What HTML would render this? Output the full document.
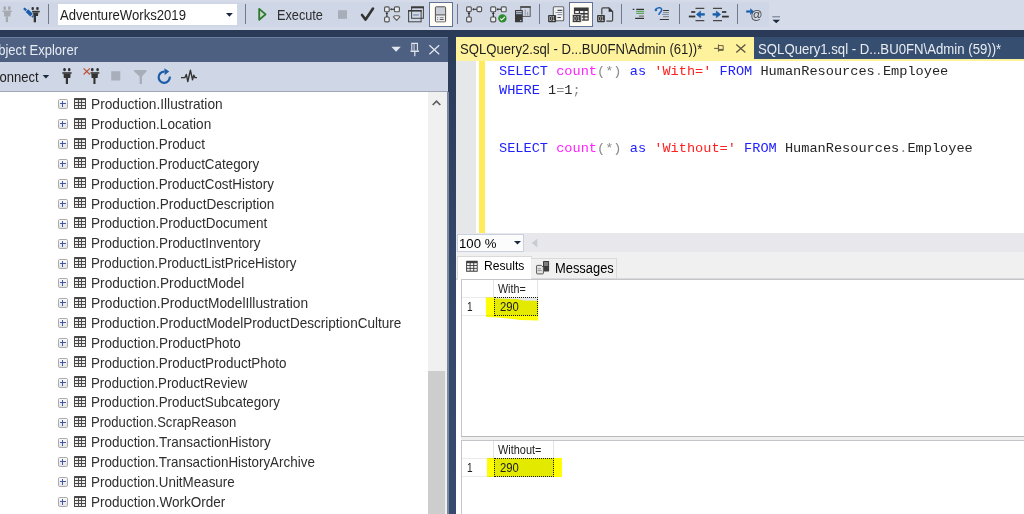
<!DOCTYPE html>
<html><head><meta charset="utf-8"><style>
*{margin:0;padding:0;box-sizing:border-box}
html,body{width:1024px;height:514px;overflow:hidden;font-family:"Liberation Sans",sans-serif;position:relative}
body{background:linear-gradient(#293955 0px,#2B3C5A 60px,#34486A 280px,#374B6E 514px)}
.a{position:absolute}
.t{position:absolute;white-space:pre;line-height:1;transform-origin:0 0}
svg{position:absolute;overflow:visible}
.sep{position:absolute;top:4px;width:1px;height:20px;background:#737A90}
.hl{position:absolute;top:2px;width:24px;height:25px;background:#FFFDF6;border:1px solid #5F7298}
#code{left:499px;top:62px;font-family:"Liberation Mono",monospace;font-size:13.62px;line-height:19.23px;white-space:pre;color:#262626}
.kw{color:#2020FF}.fn{color:#FF22FF}.st{color:#FF2020}.op{color:#8A8A8A}

</style></head><body>
<svg width="0" height="0" style="position:absolute"><defs><linearGradient id="exg" x1="0" y1="0" x2="0" y2="1"><stop offset="0" stop-color="#FAFAFA"/><stop offset="1" stop-color="#E2E2E2"/></linearGradient></defs></svg>
<div class="a" style="left:0;top:0;width:1024px;height:30px;background:#D6DBE9"></div>
<div class="a" style="left:0;top:2px;width:769px;height:25px;background:#CFD6E5"></div>
<div class="a" style="left:769px;top:2px;width:12px;height:25px;background:#D6DBE9"></div>
<div class="sep" style="left:48px"></div>
<div class="sep" style="left:245px"></div>
<div class="sep" style="left:457px"></div>
<div class="sep" style="left:539px"></div>
<div class="sep" style="left:621px"></div>
<div class="sep" style="left:679px"></div>
<div class="sep" style="left:737px"></div>
<svg style="left:0;top:0;z-index:5" width="1024" height="514" viewBox="0 0 1024 514">
<!-- gray plug -->
<g fill="#A6A9B0"><rect x="3.5" y="6.3" width="2.5" height="3.8" rx="1.1"/><rect x="8" y="6.3" width="2.6" height="3.8" rx="1.1"/><rect x="2.5" y="10.6" width="9.4" height="1.4"/><path d="M3.9 12h6.8l-0.4 4.5h-6z"/><rect x="5.8" y="16.3" width="2.2" height="5.8"/></g>
<!-- pencil plug -->
<g fill="#343434"><rect x="31.5" y="6.9" width="2.4" height="3.2" rx="1.1"/><rect x="36.2" y="6.9" width="2.5" height="3.2" rx="1.1"/><rect x="32.1" y="10.8" width="7.6" height="1.6"/><path d="M33.1 12.4h5.2l-0.3 3.5h-4.6z"/><rect x="33.7" y="15.7" width="2.3" height="6.6"/></g>
<g stroke="#1A5EAB" stroke-linecap="butt"><path d="M23.9 8.2L26.2 10.4" stroke-width="2.2"/><path d="M26.9 10.6L31.6 15.1" stroke-width="3.6"/><path d="M32 15.8L33.3 17" stroke-width="1.8"/></g>
<!-- execute -->
<path d="M259.2 8.9V19.8L265.6 14.35Z" fill="#CBD8CC" stroke="#2C7A2C" stroke-width="1.8" stroke-linejoin="round"/>
<!-- stop -->
<rect x="338" y="10.2" width="9" height="8.6" fill="#A8AEB9"/>
<!-- check -->
<path d="M362 15L365.6 19.6L373 8.6" fill="none" stroke="#333" stroke-width="2.6" stroke-linecap="round" stroke-linejoin="round"/>
<!-- display est plan -->
<g fill="#E9ECF1" stroke="#555" stroke-width="1.15"><rect x="384.6" y="6.8" width="4.6" height="4.9" rx="1"/><rect x="394.4" y="6.8" width="5" height="4.9" rx="1"/><rect x="384.6" y="17" width="4.6" height="4.8" rx="1"/></g>
<g stroke="#2A2A2A" stroke-width="1.1" fill="#2A2A2A"><path d="M391.2 9.3h3.2M386.9 12.2v4.8"/><path d="M390 9.3l1.6-1.3v2.6z" stroke="none"/><path d="M386.9 12.4l-1.3 1.6h2.6z" stroke="none"/></g>
<path d="M393.4 16.8l1.3-1.1h3.9l1.3 1.1l-3.3 3.5z" fill="#E8EAEE" stroke="#5E5E5E" stroke-width="1.1" stroke-linejoin="round"/>
<!-- two windows -->
<g fill="none" stroke="#444" stroke-width="1"><rect x="411.6" y="7" width="11.8" height="11.3"/><rect x="408.6" y="10.5" width="12.5" height="11.3" fill="none"/></g>
<rect x="411.1" y="6.5" width="12.8" height="1.8" fill="#3A3A3A"/><rect x="408.1" y="10" width="13.5" height="1.6" fill="#3A3A3A"/>
<rect x="413.2" y="14.3" width="5.6" height="1.3" fill="#7C8CA5"/>
<!-- hl icon 1 -->
<rect x="435.4" y="6.8" width="10.2" height="15" rx="0.8" fill="#C9CED9" stroke="#505050" stroke-width="1"/>
<rect x="436" y="14.8" width="9" height="6.5" fill="#ECEEF2"/><rect x="435.5" y="14.2" width="10.2" height="1.3" fill="#6E6E6E"/>
<g fill="#555"><rect x="437.2" y="17.2" width="0.9" height="0.9"/><rect x="439.7" y="17.1" width="4" height="0.9" fill="#888"/><rect x="437.2" y="19" width="0.9" height="0.9"/><rect x="439.7" y="18.9" width="4" height="1.1"/></g>
<!-- plan icon 1 -->
<g fill="#E9ECF1" stroke="#555" stroke-width="1.15"><rect x="466.6" y="6.8" width="4.7" height="4.8" rx="1"/><rect x="477" y="6.8" width="4.6" height="4.8" rx="1"/><rect x="466.6" y="17" width="4.7" height="4.8" rx="1"/></g>
<g stroke="#2A2A2A" stroke-width="1.1"><path d="M473.2 9.3h3.6M469 12.2v4.6"/></g><g fill="#2A2A2A"><path d="M472.2 9.3l1.6-1.4v2.8z"/><path d="M469 12.3l-1.4 1.6h2.8z"/></g>
<!-- plan icon 2 -->
<g fill="#E9ECF1" stroke="#555" stroke-width="1.15"><rect x="490.7" y="6.8" width="5" height="4.9" rx="1"/><rect x="501.3" y="6.8" width="4.9" height="4.9" rx="1"/><rect x="490.7" y="17" width="5" height="4.8" rx="1"/></g>
<g stroke="#2A2A2A" stroke-width="1.1"><path d="M497.6 9.3h3.6M493.3 12.3v4.6"/></g><g fill="#2A2A2A"><path d="M496.6 9.3l1.6-1.4v2.8z"/><path d="M493.3 12.3l-1.4 1.6h2.8z"/></g>
<circle cx="502.4" cy="18.4" r="4.2" fill="#2E8B2E"/><path d="M500.2 18.6l1.5 1.4l3.2-3.2" fill="none" stroke="#F4F8F0" stroke-width="1.1"/>
<!-- client stats -->
<rect x="520.8" y="6.8" width="9.4" height="9.6" fill="none" stroke="#5A5A5A" stroke-width="1"/><rect x="520.3" y="6.3" width="10.4" height="1.5" fill="#444"/>
<g fill="#9AA0AA"><rect x="524.7" y="9.5" width="1.2" height="6"/><rect x="527" y="11.8" width="1.2" height="3.7"/></g>
<rect x="515" y="10" width="7.8" height="12.3" rx="0.6" fill="#3A3A3A"/><rect x="516" y="11" width="5.8" height="1.2" fill="#B9BCC4"/><rect x="516" y="12.6" width="5.8" height="1.6" fill="#9EB4CC"/><rect x="520" y="20" width="1.3" height="1.1" fill="#AFC4C8"/>
<!-- results to text -->
<rect x="553.3" y="6.8" width="10.4" height="14" rx="1" fill="#EEF0F4" stroke="#686868" stroke-width="1.1"/>
<g><rect x="557.5" y="9.8" width="4.8" height="1.1" fill="#333"/><rect x="555.5" y="12" width="6.8" height="1" fill="#999"/><rect x="557.5" y="14" width="4.8" height="1.1" fill="#8A96A8"/><rect x="557.5" y="17" width="3.3" height="1" fill="#444"/></g>
<rect x="548.1" y="14.9" width="8" height="7.4" rx="0.8" fill="#3A3A3A"/>
<text x="549.1" y="21.3" font-family="Liberation Sans" font-size="7.5" fill="#DDDDDD" textLength="6" lengthAdjust="spacingAndGlyphs">01</text>
<!-- results to grid -->
<rect x="573.9" y="7.5" width="14.8" height="13.2" fill="#3A3A3A"/>
<g fill="#F2F3F6"><rect x="575.2" y="11" width="3.6" height="2"/><rect x="580" y="11" width="3.4" height="2"/><rect x="584.6" y="11" width="3" height="2"/><rect x="584.6" y="14.5" width="3" height="1.8"/><rect x="584.6" y="17.6" width="3" height="1.8"/><rect x="581.5" y="14.5" width="1.8" height="1.8"/><rect x="581.5" y="17.6" width="1.8" height="1.8"/></g>
<rect x="572.3" y="14.4" width="9" height="8.2" rx="0.8" fill="#3A3A3A" stroke="#FFFDF6" stroke-width="0.8"/>
<text x="573.6" y="21.3" font-family="Liberation Sans" font-size="7.5" fill="#DDDDDD" textLength="6.3" lengthAdjust="spacingAndGlyphs">01</text>
<!-- results to file -->
<path d="M601.8 14.5V8.9q0-1 1-1h6.3l3.5 3.6v8.6q0 1-1 1h-5.2" fill="none" stroke="#474747" stroke-width="1.2"/>
<path d="M608.6 7.6l4.3 4.2h-4.3z" fill="#2E2E2E"/>
<rect x="597.1" y="14.9" width="7.8" height="7.4" rx="0.8" fill="#3A3A3A"/>
<text x="598" y="21.3" font-family="Liberation Sans" font-size="7.5" fill="#DDDDDD" textLength="6" lengthAdjust="spacingAndGlyphs">01</text>
<!-- comment -->
<g stroke-width="1.3"><path d="M632.7 9.3h1.6M636.2 9.3h7.8M635.2 18.4h8.8" stroke="#333"/><path d="M636.2 11.4h7.9M636.2 13.3h7.9" stroke="#5DA55D"/><path d="M639 16.1h5" stroke="#7A7A7A"/></g>
<!-- uncomment -->
<path d="M655.8 9.2Q657.6 7.4 660 7.8Q662.3 8.6 661.4 10.9L658.9 14.3" fill="none" stroke="#1C64B4" stroke-width="1.5" stroke-linecap="round"/><circle cx="655.9" cy="9.9" r="1.25" fill="#1C64B4"/>
<g stroke-width="1.05"><path d="M663.1 10.5h5.8M659.8 19.4h9.1" stroke="#333"/><path d="M663.1 12.4h5.8M663.1 16.6h5.8" stroke="#8A8A8A"/><path d="M662.2 14.4h6.7" stroke="#7890AC"/></g>
<!-- decrease indent -->
<g stroke="#474747"><path d="M695.5 8.3h8.8M695.5 20.7h8.8" stroke-width="1.3"/><path d="M691.2 12h4.1" stroke-width="1.7" stroke="#333"/><path d="M688.8 16.5h6.5" stroke-width="1.8" stroke="#333"/></g>
<path d="M696.3 14.4l4.3-3.3v2.5h3.9v1.6h-3.9v2.5z" fill="#1A5FAD" stroke="#1A5FAD" stroke-width="0.6" stroke-linejoin="round"/>
<!-- increase indent -->
<g stroke="#474747"><path d="M713 8.3h9M713 20.7h9" stroke-width="1.3"/><path d="M722 12h4.3" stroke-width="1.7" stroke="#333"/><path d="M722 16.6h6.8" stroke-width="1.8" stroke="#333"/></g>
<path d="M720.6 14.4l-4.3-3.3v2.5h-3.4v1.6h3.4v2.5z" fill="#1A5FAD" stroke="#1A5FAD" stroke-width="0.6" stroke-linejoin="round"/>
<!-- @ -->
<path d="M746.2 11.5h4.2" stroke="#1A5FAD" stroke-width="2.2"/><path d="M750.2 8.2l3.8 3.3l-3.8 3.4z" fill="#1A5FAD"/>
<text x="750.6" y="18.6" font-family="Liberation Sans" font-size="13" fill="#4A4A4A" textLength="12" lengthAdjust="spacingAndGlyphs">@</text>
<!-- overflow -->
<path d="M772.3 16.8h7.7" stroke="#5B6878" stroke-width="0.9"/><path d="M772.5 19.8h7.5l-3.75 3.5z" fill="#1B293E"/>
<!-- OE header icons -->
<path d="M391.4 46.7h9.4l-4.7 5z" fill="#E2E6EE"/>
<g fill="none" stroke="#E2E6EE"><path d="M411.8 50.5V43.4h5.6v7.1" stroke-width="1.1"/><path d="M414.1 43.6v6.9" stroke-width="0.9"/><path d="M410.5 51.2h8.5" stroke-width="1.5"/><path d="M414.8 51.5v4.7" stroke-width="1.2"/></g>
<path d="M429.4 45.3l9.8 8.9M439.2 45.3l-9.8 8.9" stroke="#E2E6EE" stroke-width="1.3"/>
<!-- tab icons -->
<g fill="none" stroke="#6B6246"><path d="M714.1 48.4h4.4" stroke-width="1.1"/><path d="M718.5 44.4v7.3" stroke-width="1.1"/><path d="M719 45.6h4.2v4.7h-4.2" stroke-width="1"/><path d="M719 49.6h4.2" stroke-width="1.4"/></g>
<path d="M736.3 44.6l9.1 8M745.4 44.6l-9.1 8" stroke="#5A5440" stroke-width="1.3"/>
<!-- OE toolbar icons -->
<path d="M42.6 75h6.6l-3.3 3.5z" fill="#1B293E"/>
<g fill="#333"><rect x="63.3" y="68.1" width="2.5" height="3.2" rx="1.1"/><rect x="68" y="68.1" width="2.4" height="3.2" rx="1.1"/><rect x="62.3" y="72.2" width="9.3" height="1.5"/><path d="M63.5 73.6h7.1l-0.3 4.3h-6.5z"/><rect x="65.8" y="77.7" width="2.2" height="6.3"/></g>
<path d="M83.6 68.3l6.3 6.2M89.9 68.3l-6.3 6.2" stroke="#BF5030" stroke-width="1.15"/>
<g fill="#333"><rect x="91" y="68.1" width="2.5" height="3.2" rx="1.1"/><rect x="96.4" y="68.1" width="2.4" height="3.2" rx="1.1"/><rect x="90.5" y="72.2" width="8.8" height="1.5"/><path d="M91.3 73.6h6.7l-0.3 4.4h-6.1z"/><rect x="93.4" y="77.8" width="2.1" height="6.2"/></g>
<rect x="111.2" y="71.2" width="9.1" height="9.3" fill="#A9AFBA"/>
<path d="M134 70h12.6v1.2l-4.6 5.2v7.6h-2.4v-7.6l-5.6-5.2z" fill="#A8AEB8"/>
<path d="M169.8 76.6A5.6 5.6 0 1 1 164.6 71.6" fill="none" stroke="#1C5CA8" stroke-width="2.2"/>
<path d="M164.4 68.2l4.8 3.4l-4.5 3.3z" fill="#1C5CA8"/>
<path d="M181 77.6h4l1.3-3.2l1.5 7.2l2.6-11.5l2.1 9.6l1.3-4.5l1.2 2.4h2" fill="none" stroke="#333" stroke-width="1.4" stroke-linejoin="round"/>
<!-- results icons -->
<rect x="466.1" y="260.7" width="11.6" height="11" rx="0.5" fill="#3E3E3E"/>
<g fill="#F4F4F4"><rect x="467.1" y="263.2" width="2.6" height="1.9"/><rect x="470.6" y="263.2" width="2.6" height="1.9"/><rect x="474.2" y="263.2" width="2.6" height="1.9"/><rect x="467.1" y="266" width="2.6" height="1.9"/><rect x="470.6" y="266" width="2.6" height="1.9"/><rect x="474.2" y="266" width="2.6" height="1.9"/><rect x="467.1" y="268.8" width="2.6" height="1.9"/><rect x="470.6" y="268.8" width="2.6" height="1.9"/><rect x="474.2" y="268.8" width="2.6" height="1.9"/></g>
<rect x="543" y="261.1" width="6.1" height="10.3" rx="0.6" fill="#3C3C3C"/><rect x="544" y="262.5" width="4.1" height="1" fill="#BDBDBD"/><rect x="544" y="264.5" width="4.1" height="1" fill="#BDBDBD"/>
<path d="M536.6 266q0-0.6 0.6-0.6h4.2l2 2v5.9q0 0.6-0.6 0.6h-5.6q-0.6 0-0.6-0.6z" fill="#E6E6E6" stroke="#5A5A5A" stroke-width="1"/>
<g fill="#8A8A8A"><rect x="537.8" y="268.3" width="3.2" height="0.9"/><rect x="537.8" y="270.2" width="3.8" height="0.9"/></g>
</svg>

<div class="a" style="left:58px;top:4px;width:179px;height:21px;background:#fff"></div>
<div class="t" style="left:59.70px;top:7.53px;font-size:14.5px;color:#1E1E1E;font-family:'Liberation Sans',sans-serif;transform:scaleX(0.9050);">AdventureWorks2019</div>
<svg style="left:226.3px;top:13px" width="8" height="5"><path d="M0 0h6.8l-3.4 3.8z" fill="#1B293E"/></svg>
<div class="t" style="left:276.72px;top:7.53px;font-size:14.5px;color:#2E2E2E;font-family:'Liberation Sans',sans-serif;transform:scaleX(0.8765);">Execute</div>
<div class="hl" style="left:429px"></div>
<div class="hl" style="left:569px"></div>
<div class="a" style="left:0;top:37px;width:448px;height:25px;background:#4D6082;border-top:1px solid #6D7FA0"></div>
<div class="t" style="left:-11.89px;top:42.56px;font-size:14.7px;color:#E8ECF3;font-family:'Liberation Sans',sans-serif;transform:scaleX(0.8900);">Object Explorer</div>

<div class="a" style="left:0;top:62px;width:448px;height:29px;background:#CFD6E5"></div>
<div class="a" style="left:0;top:91px;width:448px;height:1px;background:#9EA6B6"></div>
<div class="a" style="left:0;top:92px;width:428px;height:422px;background:#fff"></div>
<div class="t" style="left:-9.70px;top:69.63px;font-size:14.5px;color:#1E1E1E;font-family:'Liberation Sans',sans-serif;transform:scaleX(0.9000);">Connect</div>

<div class="a" style="left:428px;top:92px;width:19px;height:422px;background:#F0F0F0"></div>
<div class="a" style="left:428px;top:371px;width:17px;height:143px;background:#CDCDCD"></div>
<svg style="left:432px;top:99px" width="10" height="8"><path d="M0.7 6L4.5 2.1L8.3 6" fill="none" stroke="#5E5E5E" stroke-width="1.7"/></svg>
<div class="a" style="left:447px;top:92px;width:2px;height:422px;background:#7A879F"></div>
<svg style="left:58px;top:99px" width="10" height="10"><rect x="0.5" y="0.5" width="9" height="9" rx="1.2" fill="url(#exg)" stroke="#ABABAB"/><path d="M2 4.5h6M4.5 2v6" stroke="#3F58A6" stroke-width="1"/></svg>
<svg style="left:74px;top:98px" width="12" height="11"><rect x="0" y="0" width="12" height="11" rx="0.6" fill="#474747"/><g fill="#ECECEC"><rect x="1" y="2" width="3" height="2"/><rect x="5" y="2" width="2" height="2"/><rect x="8" y="2" width="3" height="2"/><rect x="1" y="5" width="3" height="2"/><rect x="5" y="5" width="2" height="2"/><rect x="8" y="5" width="3" height="2"/><rect x="1" y="8" width="3" height="2"/><rect x="5" y="8" width="2" height="2"/><rect x="8" y="8" width="3" height="2"/></g></svg>
<div class="t" style="left:90.89px;top:96.10px;font-size:15px;color:#2E2E2E;transform:scaleX(0.9126)">Production.Illustration</div>
<svg style="left:58px;top:119px" width="10" height="10"><rect x="0.5" y="0.5" width="9" height="9" rx="1.2" fill="url(#exg)" stroke="#ABABAB"/><path d="M2 4.5h6M4.5 2v6" stroke="#3F58A6" stroke-width="1"/></svg>
<svg style="left:74px;top:118px" width="12" height="11"><rect x="0" y="0" width="12" height="11" rx="0.6" fill="#474747"/><g fill="#ECECEC"><rect x="1" y="2" width="3" height="2"/><rect x="5" y="2" width="2" height="2"/><rect x="8" y="2" width="3" height="2"/><rect x="1" y="5" width="3" height="2"/><rect x="5" y="5" width="2" height="2"/><rect x="8" y="5" width="3" height="2"/><rect x="1" y="8" width="3" height="2"/><rect x="5" y="8" width="2" height="2"/><rect x="8" y="8" width="3" height="2"/></g></svg>
<div class="t" style="left:90.89px;top:115.99px;font-size:15px;color:#2E2E2E;transform:scaleX(0.9069)">Production.Location</div>
<svg style="left:58px;top:139px" width="10" height="10"><rect x="0.5" y="0.5" width="9" height="9" rx="1.2" fill="url(#exg)" stroke="#ABABAB"/><path d="M2 4.5h6M4.5 2v6" stroke="#3F58A6" stroke-width="1"/></svg>
<svg style="left:74px;top:138px" width="12" height="11"><rect x="0" y="0" width="12" height="11" rx="0.6" fill="#474747"/><g fill="#ECECEC"><rect x="1" y="2" width="3" height="2"/><rect x="5" y="2" width="2" height="2"/><rect x="8" y="2" width="3" height="2"/><rect x="1" y="5" width="3" height="2"/><rect x="5" y="5" width="2" height="2"/><rect x="8" y="5" width="3" height="2"/><rect x="1" y="8" width="3" height="2"/><rect x="5" y="8" width="2" height="2"/><rect x="8" y="8" width="3" height="2"/></g></svg>
<div class="t" style="left:90.91px;top:135.88px;font-size:15px;color:#2E2E2E;transform:scaleX(0.8929)">Production.Product</div>
<svg style="left:58px;top:159px" width="10" height="10"><rect x="0.5" y="0.5" width="9" height="9" rx="1.2" fill="url(#exg)" stroke="#ABABAB"/><path d="M2 4.5h6M4.5 2v6" stroke="#3F58A6" stroke-width="1"/></svg>
<svg style="left:74px;top:157px" width="12" height="11"><rect x="0" y="0" width="12" height="11" rx="0.6" fill="#474747"/><g fill="#ECECEC"><rect x="1" y="2" width="3" height="2"/><rect x="5" y="2" width="2" height="2"/><rect x="8" y="2" width="3" height="2"/><rect x="1" y="5" width="3" height="2"/><rect x="5" y="5" width="2" height="2"/><rect x="8" y="5" width="3" height="2"/><rect x="1" y="8" width="3" height="2"/><rect x="5" y="8" width="2" height="2"/><rect x="8" y="8" width="3" height="2"/></g></svg>
<div class="t" style="left:90.91px;top:155.77px;font-size:15px;color:#2E2E2E;transform:scaleX(0.8926)">Production.ProductCategory</div>
<svg style="left:58px;top:179px" width="10" height="10"><rect x="0.5" y="0.5" width="9" height="9" rx="1.2" fill="url(#exg)" stroke="#ABABAB"/><path d="M2 4.5h6M4.5 2v6" stroke="#3F58A6" stroke-width="1"/></svg>
<svg style="left:74px;top:177px" width="12" height="11"><rect x="0" y="0" width="12" height="11" rx="0.6" fill="#474747"/><g fill="#ECECEC"><rect x="1" y="2" width="3" height="2"/><rect x="5" y="2" width="2" height="2"/><rect x="8" y="2" width="3" height="2"/><rect x="1" y="5" width="3" height="2"/><rect x="5" y="5" width="2" height="2"/><rect x="8" y="5" width="3" height="2"/><rect x="1" y="8" width="3" height="2"/><rect x="5" y="8" width="2" height="2"/><rect x="8" y="8" width="3" height="2"/></g></svg>
<div class="t" style="left:90.91px;top:175.66px;font-size:15px;color:#2E2E2E;transform:scaleX(0.8917)">Production.ProductCostHistory</div>
<svg style="left:58px;top:199px" width="10" height="10"><rect x="0.5" y="0.5" width="9" height="9" rx="1.2" fill="url(#exg)" stroke="#ABABAB"/><path d="M2 4.5h6M4.5 2v6" stroke="#3F58A6" stroke-width="1"/></svg>
<svg style="left:74px;top:197px" width="12" height="11"><rect x="0" y="0" width="12" height="11" rx="0.6" fill="#474747"/><g fill="#ECECEC"><rect x="1" y="2" width="3" height="2"/><rect x="5" y="2" width="2" height="2"/><rect x="8" y="2" width="3" height="2"/><rect x="1" y="5" width="3" height="2"/><rect x="5" y="5" width="2" height="2"/><rect x="8" y="5" width="3" height="2"/><rect x="1" y="8" width="3" height="2"/><rect x="5" y="8" width="2" height="2"/><rect x="8" y="8" width="3" height="2"/></g></svg>
<div class="t" style="left:90.90px;top:195.55px;font-size:15px;color:#2E2E2E;transform:scaleX(0.9050)">Production.ProductDescription</div>
<svg style="left:58px;top:219px" width="10" height="10"><rect x="0.5" y="0.5" width="9" height="9" rx="1.2" fill="url(#exg)" stroke="#ABABAB"/><path d="M2 4.5h6M4.5 2v6" stroke="#3F58A6" stroke-width="1"/></svg>
<svg style="left:74px;top:217px" width="12" height="11"><rect x="0" y="0" width="12" height="11" rx="0.6" fill="#474747"/><g fill="#ECECEC"><rect x="1" y="2" width="3" height="2"/><rect x="5" y="2" width="2" height="2"/><rect x="8" y="2" width="3" height="2"/><rect x="1" y="5" width="3" height="2"/><rect x="5" y="5" width="2" height="2"/><rect x="8" y="5" width="3" height="2"/><rect x="1" y="8" width="3" height="2"/><rect x="5" y="8" width="2" height="2"/><rect x="8" y="8" width="3" height="2"/></g></svg>
<div class="t" style="left:90.90px;top:215.44px;font-size:15px;color:#2E2E2E;transform:scaleX(0.9000)">Production.ProductDocument</div>
<svg style="left:58px;top:239px" width="10" height="10"><rect x="0.5" y="0.5" width="9" height="9" rx="1.2" fill="url(#exg)" stroke="#ABABAB"/><path d="M2 4.5h6M4.5 2v6" stroke="#3F58A6" stroke-width="1"/></svg>
<svg style="left:74px;top:237px" width="12" height="11"><rect x="0" y="0" width="12" height="11" rx="0.6" fill="#474747"/><g fill="#ECECEC"><rect x="1" y="2" width="3" height="2"/><rect x="5" y="2" width="2" height="2"/><rect x="8" y="2" width="3" height="2"/><rect x="1" y="5" width="3" height="2"/><rect x="5" y="5" width="2" height="2"/><rect x="8" y="5" width="3" height="2"/><rect x="1" y="8" width="3" height="2"/><rect x="5" y="8" width="2" height="2"/><rect x="8" y="8" width="3" height="2"/></g></svg>
<div class="t" style="left:90.90px;top:235.33px;font-size:15px;color:#2E2E2E;transform:scaleX(0.8957)">Production.ProductInventory</div>
<svg style="left:58px;top:259px" width="10" height="10"><rect x="0.5" y="0.5" width="9" height="9" rx="1.2" fill="url(#exg)" stroke="#ABABAB"/><path d="M2 4.5h6M4.5 2v6" stroke="#3F58A6" stroke-width="1"/></svg>
<svg style="left:74px;top:257px" width="12" height="11"><rect x="0" y="0" width="12" height="11" rx="0.6" fill="#474747"/><g fill="#ECECEC"><rect x="1" y="2" width="3" height="2"/><rect x="5" y="2" width="2" height="2"/><rect x="8" y="2" width="3" height="2"/><rect x="1" y="5" width="3" height="2"/><rect x="5" y="5" width="2" height="2"/><rect x="8" y="5" width="3" height="2"/><rect x="1" y="8" width="3" height="2"/><rect x="5" y="8" width="2" height="2"/><rect x="8" y="8" width="3" height="2"/></g></svg>
<div class="t" style="left:90.91px;top:255.22px;font-size:15px;color:#2E2E2E;transform:scaleX(0.8866)">Production.ProductListPriceHistory</div>
<svg style="left:58px;top:278px" width="10" height="10"><rect x="0.5" y="0.5" width="9" height="9" rx="1.2" fill="url(#exg)" stroke="#ABABAB"/><path d="M2 4.5h6M4.5 2v6" stroke="#3F58A6" stroke-width="1"/></svg>
<svg style="left:74px;top:277px" width="12" height="11"><rect x="0" y="0" width="12" height="11" rx="0.6" fill="#474747"/><g fill="#ECECEC"><rect x="1" y="2" width="3" height="2"/><rect x="5" y="2" width="2" height="2"/><rect x="8" y="2" width="3" height="2"/><rect x="1" y="5" width="3" height="2"/><rect x="5" y="5" width="2" height="2"/><rect x="8" y="5" width="3" height="2"/><rect x="1" y="8" width="3" height="2"/><rect x="5" y="8" width="2" height="2"/><rect x="8" y="8" width="3" height="2"/></g></svg>
<div class="t" style="left:90.89px;top:275.11px;font-size:15px;color:#2E2E2E;transform:scaleX(0.9096)">Production.ProductModel</div>
<svg style="left:58px;top:298px" width="10" height="10"><rect x="0.5" y="0.5" width="9" height="9" rx="1.2" fill="url(#exg)" stroke="#ABABAB"/><path d="M2 4.5h6M4.5 2v6" stroke="#3F58A6" stroke-width="1"/></svg>
<svg style="left:74px;top:297px" width="12" height="11"><rect x="0" y="0" width="12" height="11" rx="0.6" fill="#474747"/><g fill="#ECECEC"><rect x="1" y="2" width="3" height="2"/><rect x="5" y="2" width="2" height="2"/><rect x="8" y="2" width="3" height="2"/><rect x="1" y="5" width="3" height="2"/><rect x="5" y="5" width="2" height="2"/><rect x="8" y="5" width="3" height="2"/><rect x="1" y="8" width="3" height="2"/><rect x="5" y="8" width="2" height="2"/><rect x="8" y="8" width="3" height="2"/></g></svg>
<div class="t" style="left:90.88px;top:295.00px;font-size:15px;color:#2E2E2E;transform:scaleX(0.9170)">Production.ProductModelIllustration</div>
<svg style="left:58px;top:318px" width="10" height="10"><rect x="0.5" y="0.5" width="9" height="9" rx="1.2" fill="url(#exg)" stroke="#ABABAB"/><path d="M2 4.5h6M4.5 2v6" stroke="#3F58A6" stroke-width="1"/></svg>
<svg style="left:74px;top:317px" width="12" height="11"><rect x="0" y="0" width="12" height="11" rx="0.6" fill="#474747"/><g fill="#ECECEC"><rect x="1" y="2" width="3" height="2"/><rect x="5" y="2" width="2" height="2"/><rect x="8" y="2" width="3" height="2"/><rect x="1" y="5" width="3" height="2"/><rect x="5" y="5" width="2" height="2"/><rect x="8" y="5" width="3" height="2"/><rect x="1" y="8" width="3" height="2"/><rect x="5" y="8" width="2" height="2"/><rect x="8" y="8" width="3" height="2"/></g></svg>
<div class="t" style="left:90.90px;top:314.89px;font-size:15px;color:#2E2E2E;transform:scaleX(0.9035)">Production.ProductModelProductDescriptionCulture</div>
<svg style="left:58px;top:338px" width="10" height="10"><rect x="0.5" y="0.5" width="9" height="9" rx="1.2" fill="url(#exg)" stroke="#ABABAB"/><path d="M2 4.5h6M4.5 2v6" stroke="#3F58A6" stroke-width="1"/></svg>
<svg style="left:74px;top:336px" width="12" height="11"><rect x="0" y="0" width="12" height="11" rx="0.6" fill="#474747"/><g fill="#ECECEC"><rect x="1" y="2" width="3" height="2"/><rect x="5" y="2" width="2" height="2"/><rect x="8" y="2" width="3" height="2"/><rect x="1" y="5" width="3" height="2"/><rect x="5" y="5" width="2" height="2"/><rect x="8" y="5" width="3" height="2"/><rect x="1" y="8" width="3" height="2"/><rect x="5" y="8" width="2" height="2"/><rect x="8" y="8" width="3" height="2"/></g></svg>
<div class="t" style="left:90.90px;top:334.78px;font-size:15px;color:#2E2E2E;transform:scaleX(0.8976)">Production.ProductPhoto</div>
<svg style="left:58px;top:358px" width="10" height="10"><rect x="0.5" y="0.5" width="9" height="9" rx="1.2" fill="url(#exg)" stroke="#ABABAB"/><path d="M2 4.5h6M4.5 2v6" stroke="#3F58A6" stroke-width="1"/></svg>
<svg style="left:74px;top:356px" width="12" height="11"><rect x="0" y="0" width="12" height="11" rx="0.6" fill="#474747"/><g fill="#ECECEC"><rect x="1" y="2" width="3" height="2"/><rect x="5" y="2" width="2" height="2"/><rect x="8" y="2" width="3" height="2"/><rect x="1" y="5" width="3" height="2"/><rect x="5" y="5" width="2" height="2"/><rect x="8" y="5" width="3" height="2"/><rect x="1" y="8" width="3" height="2"/><rect x="5" y="8" width="2" height="2"/><rect x="8" y="8" width="3" height="2"/></g></svg>
<div class="t" style="left:90.91px;top:354.67px;font-size:15px;color:#2E2E2E;transform:scaleX(0.8945)">Production.ProductProductPhoto</div>
<svg style="left:58px;top:378px" width="10" height="10"><rect x="0.5" y="0.5" width="9" height="9" rx="1.2" fill="url(#exg)" stroke="#ABABAB"/><path d="M2 4.5h6M4.5 2v6" stroke="#3F58A6" stroke-width="1"/></svg>
<svg style="left:74px;top:376px" width="12" height="11"><rect x="0" y="0" width="12" height="11" rx="0.6" fill="#474747"/><g fill="#ECECEC"><rect x="1" y="2" width="3" height="2"/><rect x="5" y="2" width="2" height="2"/><rect x="8" y="2" width="3" height="2"/><rect x="1" y="5" width="3" height="2"/><rect x="5" y="5" width="2" height="2"/><rect x="8" y="5" width="3" height="2"/><rect x="1" y="8" width="3" height="2"/><rect x="5" y="8" width="2" height="2"/><rect x="8" y="8" width="3" height="2"/></g></svg>
<div class="t" style="left:90.92px;top:374.56px;font-size:15px;color:#2E2E2E;transform:scaleX(0.8841)">Production.ProductReview</div>
<svg style="left:58px;top:398px" width="10" height="10"><rect x="0.5" y="0.5" width="9" height="9" rx="1.2" fill="url(#exg)" stroke="#ABABAB"/><path d="M2 4.5h6M4.5 2v6" stroke="#3F58A6" stroke-width="1"/></svg>
<svg style="left:74px;top:396px" width="12" height="11"><rect x="0" y="0" width="12" height="11" rx="0.6" fill="#474747"/><g fill="#ECECEC"><rect x="1" y="2" width="3" height="2"/><rect x="5" y="2" width="2" height="2"/><rect x="8" y="2" width="3" height="2"/><rect x="1" y="5" width="3" height="2"/><rect x="5" y="5" width="2" height="2"/><rect x="8" y="5" width="3" height="2"/><rect x="1" y="8" width="3" height="2"/><rect x="5" y="8" width="2" height="2"/><rect x="8" y="8" width="3" height="2"/></g></svg>
<div class="t" style="left:90.91px;top:394.45px;font-size:15px;color:#2E2E2E;transform:scaleX(0.8915)">Production.ProductSubcategory</div>
<svg style="left:58px;top:418px" width="10" height="10"><rect x="0.5" y="0.5" width="9" height="9" rx="1.2" fill="url(#exg)" stroke="#ABABAB"/><path d="M2 4.5h6M4.5 2v6" stroke="#3F58A6" stroke-width="1"/></svg>
<svg style="left:74px;top:416px" width="12" height="11"><rect x="0" y="0" width="12" height="11" rx="0.6" fill="#474747"/><g fill="#ECECEC"><rect x="1" y="2" width="3" height="2"/><rect x="5" y="2" width="2" height="2"/><rect x="8" y="2" width="3" height="2"/><rect x="1" y="5" width="3" height="2"/><rect x="5" y="5" width="2" height="2"/><rect x="8" y="5" width="3" height="2"/><rect x="1" y="8" width="3" height="2"/><rect x="5" y="8" width="2" height="2"/><rect x="8" y="8" width="3" height="2"/></g></svg>
<div class="t" style="left:90.93px;top:414.34px;font-size:15px;color:#2E2E2E;transform:scaleX(0.8715)">Production.ScrapReason</div>
<svg style="left:58px;top:438px" width="10" height="10"><rect x="0.5" y="0.5" width="9" height="9" rx="1.2" fill="url(#exg)" stroke="#ABABAB"/><path d="M2 4.5h6M4.5 2v6" stroke="#3F58A6" stroke-width="1"/></svg>
<svg style="left:74px;top:436px" width="12" height="11"><rect x="0" y="0" width="12" height="11" rx="0.6" fill="#474747"/><g fill="#ECECEC"><rect x="1" y="2" width="3" height="2"/><rect x="5" y="2" width="2" height="2"/><rect x="8" y="2" width="3" height="2"/><rect x="1" y="5" width="3" height="2"/><rect x="5" y="5" width="2" height="2"/><rect x="8" y="5" width="3" height="2"/><rect x="1" y="8" width="3" height="2"/><rect x="5" y="8" width="2" height="2"/><rect x="8" y="8" width="3" height="2"/></g></svg>
<div class="t" style="left:90.90px;top:434.23px;font-size:15px;color:#2E2E2E;transform:scaleX(0.8970)">Production.TransactionHistory</div>
<svg style="left:58px;top:457px" width="10" height="10"><rect x="0.5" y="0.5" width="9" height="9" rx="1.2" fill="url(#exg)" stroke="#ABABAB"/><path d="M2 4.5h6M4.5 2v6" stroke="#3F58A6" stroke-width="1"/></svg>
<svg style="left:74px;top:456px" width="12" height="11"><rect x="0" y="0" width="12" height="11" rx="0.6" fill="#474747"/><g fill="#ECECEC"><rect x="1" y="2" width="3" height="2"/><rect x="5" y="2" width="2" height="2"/><rect x="8" y="2" width="3" height="2"/><rect x="1" y="5" width="3" height="2"/><rect x="5" y="5" width="2" height="2"/><rect x="8" y="5" width="3" height="2"/><rect x="1" y="8" width="3" height="2"/><rect x="5" y="8" width="2" height="2"/><rect x="8" y="8" width="3" height="2"/></g></svg>
<div class="t" style="left:90.91px;top:454.12px;font-size:15px;color:#2E2E2E;transform:scaleX(0.8940)">Production.TransactionHistoryArchive</div>
<svg style="left:58px;top:477px" width="10" height="10"><rect x="0.5" y="0.5" width="9" height="9" rx="1.2" fill="url(#exg)" stroke="#ABABAB"/><path d="M2 4.5h6M4.5 2v6" stroke="#3F58A6" stroke-width="1"/></svg>
<svg style="left:74px;top:476px" width="12" height="11"><rect x="0" y="0" width="12" height="11" rx="0.6" fill="#474747"/><g fill="#ECECEC"><rect x="1" y="2" width="3" height="2"/><rect x="5" y="2" width="2" height="2"/><rect x="8" y="2" width="3" height="2"/><rect x="1" y="5" width="3" height="2"/><rect x="5" y="5" width="2" height="2"/><rect x="8" y="5" width="3" height="2"/><rect x="1" y="8" width="3" height="2"/><rect x="5" y="8" width="2" height="2"/><rect x="8" y="8" width="3" height="2"/></g></svg>
<div class="t" style="left:90.91px;top:474.01px;font-size:15px;color:#2E2E2E;transform:scaleX(0.8931)">Production.UnitMeasure</div>
<svg style="left:58px;top:497px" width="10" height="10"><rect x="0.5" y="0.5" width="9" height="9" rx="1.2" fill="url(#exg)" stroke="#ABABAB"/><path d="M2 4.5h6M4.5 2v6" stroke="#3F58A6" stroke-width="1"/></svg>
<svg style="left:74px;top:496px" width="12" height="11"><rect x="0" y="0" width="12" height="11" rx="0.6" fill="#474747"/><g fill="#ECECEC"><rect x="1" y="2" width="3" height="2"/><rect x="5" y="2" width="2" height="2"/><rect x="8" y="2" width="3" height="2"/><rect x="1" y="5" width="3" height="2"/><rect x="5" y="5" width="2" height="2"/><rect x="8" y="5" width="3" height="2"/><rect x="1" y="8" width="3" height="2"/><rect x="5" y="8" width="2" height="2"/><rect x="8" y="8" width="3" height="2"/></g></svg>
<div class="t" style="left:90.90px;top:493.90px;font-size:15px;color:#2E2E2E;transform:scaleX(0.9014)">Production.WorkOrder</div>
<div class="a" style="left:456px;top:37px;width:568px;height:22px;background:#364E6F"></div>
<div class="a" style="left:456px;top:37px;width:298px;height:22px;background:#FFF29D"></div>
<div class="a" style="left:456px;top:59px;width:568px;height:2px;background:#FFF29D"></div>
<div class="t" style="left:460.02px;top:41.40px;font-size:15px;color:#1E1E1E;font-family:'Liberation Sans',sans-serif;transform:scaleX(0.8753);">SQLQuery2.sql - D...BU0FN\Admin (61))*</div>
<div class="t" style="left:757.82px;top:41.40px;font-size:15px;color:#E9EDF3;font-family:'Liberation Sans',sans-serif;transform:scaleX(0.8789);">SQLQuery1.sql - D...BU0FN\Admin (59))*</div>

<div class="a" style="left:456px;top:61px;width:568px;height:172px;background:#fff"></div>
<div class="a" style="left:456px;top:61px;width:20px;height:172px;background:#E6E7E9"></div>
<div class="a" style="left:479px;top:61px;width:6px;height:172px;background:#FFEB5B"></div>
<div class="a" id="code"><span class="kw">SELECT</span> <span class="fn">count</span><span class="op">(*)</span> <span class="kw">as</span> <span class="st">'With='</span> <span class="kw">FROM</span> HumanResources<span class="op">.</span>Employee
<span class="kw">WHERE</span> 1<span class="op">=</span>1<span class="op">;</span>


<span class="kw">SELECT</span> <span class="fn">count</span><span class="op">(*)</span> <span class="kw">as</span> <span class="st">'Without='</span> <span class="kw">FROM</span> HumanResources<span class="op">.</span>Employee</div>
<div class="a" style="left:456px;top:233px;width:568px;height:19px;background:#E8E8EC"></div>
<div class="a" style="left:457px;top:234px;width:67px;height:18px;background:#FCFCFD;border:1px solid #C9D0DE"></div>
<div class="t" style="left:459.29px;top:236.70px;font-size:13px;color:#000;font-family:'Liberation Sans',sans-serif;transform:scaleX(1.0139);">100 %</div>
<svg style="left:514px;top:241px" width="8" height="5"><path d="M0 0h7l-3.5 3.5z" fill="#1B293E"/></svg>
<svg style="left:531px;top:238px" width="8" height="10"><path d="M6.4 0.7v8.8L0.6 5.1z" fill="#C9CBD3"/></svg>
<div class="a" style="left:456px;top:252px;width:568px;height:262px;background:#fff"></div>
<div class="a" style="left:456px;top:252px;width:568px;height:26px;background:#F0F0F0"></div>
<div class="a" style="left:456px;top:278px;width:568px;height:2px;background:#D9D9D9"></div>
<div class="a" style="left:457px;top:256px;width:75px;height:24px;background:#fff;border:1px solid #DADADA;border-bottom:none"></div>
<div class="a" style="left:531px;top:258px;width:86px;height:20px;background:#F0F0F0;border:1px solid #DADADA;border-left:none;border-bottom:none"></div>
<div class="t" style="left:483.60px;top:259.17px;font-size:13.5px;color:#000;font-family:'Liberation Sans',sans-serif;transform:scaleX(0.8977);">Results</div>
<div class="t" style="left:554.98px;top:260.65px;font-size:14px;color:#000;font-family:'Liberation Sans',sans-serif;transform:scaleX(0.9210);">Messages</div>

<div class="a" style="left:461px;top:436px;width:563px;height:5px;background:#EFEFF0;border-top:1px solid #B9BABE"></div>
<div class="a" style="left:461px;top:279px;width:563px;height:1px;background:#C4C5C9"></div>
<div class="a" style="left:461px;top:279px;width:1px;height:157px;background:#C4C5C9"></div>
<div class="a" style="left:462px;top:297px;width:75px;height:1px;background:#EBEBEB"></div>
<div class="a" style="left:462px;top:315px;width:75px;height:1px;background:#EBEBEB"></div>
<div class="a" style="left:493px;top:280px;width:1px;height:17px;background:#E3E3E3"></div>
<div class="a" style="left:537px;top:280px;width:1px;height:17px;background:#E3E3E3"></div>
<div class="a" style="left:494px;top:297.5px;width:43.5px;height:18px;background:#E4E9F4"></div>
<svg style="left:0;top:0;mix-blend-mode:multiply" width="1024" height="514"><path d="M485.8 297.5H494.3V298.5L505 298.7L518 299.2L524 300.6L536 300.8L538.2 300.5V320.5L520 320L511 318.8L497 317.4L486 317.1Z" fill="#FFFF00"/></svg>
<div class="a" style="left:494px;top:297px;width:43.5px;height:18.5px;border:1px dotted #1A1A00"></div>
<div class="t" style="left:498.30px;top:282.74px;font-size:12px;color:#202020;font-family:'Liberation Sans',sans-serif;transform:scaleX(0.8935);">With=</div>
<div class="t" style="left:467.36px;top:301.24px;font-size:12px;color:#202020;font-family:'Liberation Sans',sans-serif;transform:scaleX(0.8400);">1</div>
<div class="t" style="left:499.96px;top:301.24px;font-size:12px;color:#202020;font-family:'Liberation Sans',sans-serif;transform:scaleX(0.9421);">290</div>
<div class="a" style="left:461px;top:440px;width:563px;height:1px;background:#C4C5C9"></div>
<div class="a" style="left:461px;top:440px;width:1px;height:74px;background:#C4C5C9"></div>
<div class="a" style="left:462px;top:458px;width:91px;height:1px;background:#EBEBEB"></div>
<div class="a" style="left:462px;top:476px;width:91px;height:1px;background:#EBEBEB"></div>
<div class="a" style="left:493px;top:441px;width:1px;height:17px;background:#E3E3E3"></div>
<div class="a" style="left:553px;top:441px;width:1px;height:17px;background:#E3E3E3"></div>
<div class="a" style="left:494px;top:458.5px;width:59.5px;height:18px;background:#E4E9F4"></div>
<div class="a" style="left:486.8px;top:457.9px;width:75px;height:18.7px;background:#FFFF00;mix-blend-mode:multiply"></div>
<div class="a" style="left:494px;top:458px;width:59.5px;height:18.5px;border:1px dotted #1A1A00"></div>
<div class="t" style="left:498.30px;top:444.24px;font-size:12px;color:#202020;font-family:'Liberation Sans',sans-serif;transform:scaleX(0.9106);">Without=</div>
<div class="t" style="left:467.36px;top:461.74px;font-size:12px;color:#202020;font-family:'Liberation Sans',sans-serif;transform:scaleX(0.8400);">1</div>
<div class="t" style="left:499.96px;top:461.74px;font-size:12px;color:#202020;font-family:'Liberation Sans',sans-serif;transform:scaleX(0.9421);">290</div>
</body></html>
